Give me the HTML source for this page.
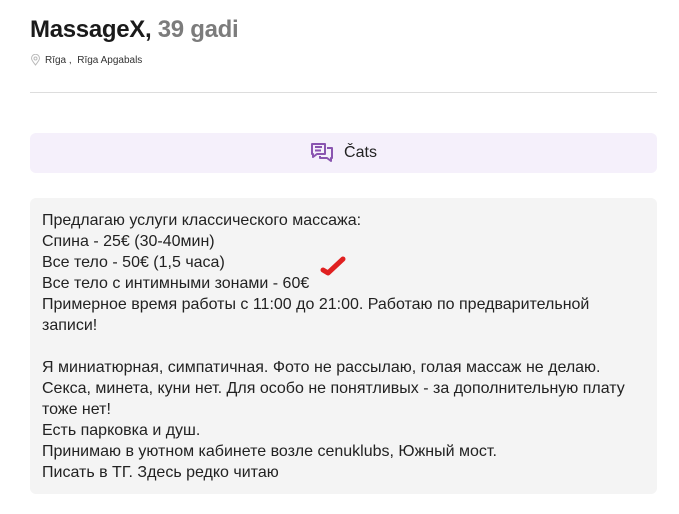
<!DOCTYPE html>
<html><head><meta charset="utf-8"><style>
body{margin:0;background:#fff;font-family:"Liberation Sans",sans-serif;width:679px;height:514px;overflow:hidden;position:relative}
h1{position:absolute;left:30px;top:16px;margin:0;font-size:24px;font-weight:bold;color:#1a1a1a;letter-spacing:-0.3px}
h1 span{color:#7c7c7c;font-weight:bold}
.loc{position:absolute;left:30px;top:54px;font-size:10px;color:#333;display:flex;align-items:center;gap:4px}
.hr{position:absolute;left:30px;top:92px;width:627px;height:1px;background:#ddd}
.chat{position:absolute;left:30px;top:133px;width:627px;height:40px;background:#f5f0fb;border-radius:6px;display:flex;align-items:center;justify-content:center;font-size:16px;color:#222;gap:10px}
.desc{position:absolute;left:30px;top:198px;width:627px;height:296px;background:#f4f4f4;border-radius:6px;box-sizing:border-box;padding:12px 30px 12px 12px;font-size:16px;line-height:21px;color:#222}
.chk{position:absolute;left:318px;top:255px}
</style></head><body>
<h1>MassageX, <span>39 gadi</span></h1>
<div class="loc"><svg width="11" height="12" viewBox="0 0 11 12"><path d="M5.5 11C3 8 1.5 6 1.5 4.3A4 4 0 0 1 9.5 4.3C9.5 6 8 8 5.5 11Z" fill="none" stroke="#bbb"/><circle cx="5.5" cy="4.5" r="1.5" fill="none" stroke="#bbb"/></svg>Rīga ,&nbsp; Rīga Apgabals</div>
<div class="hr"></div>
<div class="chat"><svg width="24" height="22" viewBox="0 0 24 22"><path d="M2 2H15V12H7L3 15V12H2Z" fill="none" stroke="#8a55b0" stroke-width="2" stroke-linejoin="round"/><path d="M5 5H12M5 8.5H11" stroke="#8a55b0" stroke-width="2"/><path d="M17 6H22V16H21V19L17 16H10V14" fill="none" stroke="#8a55b0" stroke-width="2" stroke-linejoin="round"/></svg>Čats</div>
<div class="desc">Предлагаю услуги классического массажа:<br>Спина - 25€ (30-40мин)<br>Все тело - 50€ (1,5 часа)<br>Все тело с интимными зонами - 60€<br>Примерное время работы с 11:00 до 21:00. Работаю по предварительной записи!<br><br>Я миниатюрная, симпатичная. Фото не рассылаю, голая массаж не делаю. Секса, минета, куни нет. Для особо не понятливых - за дополнительную плату тоже нет!<br>Есть парковка и душ.<br>Принимаю в уютном кабинете возле cenuklubs, Южный мост.<br>Писать в ТГ. Здесь редко читаю</div>
<svg class="chk" width="30" height="24" viewBox="0 0 30 24"><path d="M5 15L10 18L25 4" fill="none" stroke="#e02020" stroke-width="5" stroke-linecap="round" stroke-linejoin="round"/></svg>
</body></html>
